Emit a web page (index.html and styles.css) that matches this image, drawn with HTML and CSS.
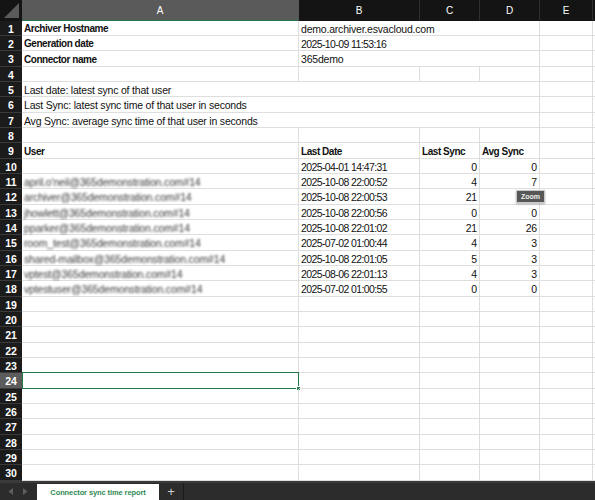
FILE: index.html
```html
<!DOCTYPE html>
<html>
<head>
<meta charset="utf-8">
<link rel="stylesheet" href="styles.css">
</head>
<body>
<div class="sheet">
  <div class="colhead">
    <div class="corner">
      <svg width="22" height="20" viewBox="0 0 22 20"><polygon points="4,18 19,18 19,3" fill="#5b5b5b"/></svg>
    </div>
    <div class="ch ca sel">A</div>
    <div class="ch cb">B</div>
    <div class="ch cc">C</div>
    <div class="ch cd">D</div>
    <div class="ch ce">E</div>
    <div class="ch cf"></div>
  </div>

  <div class="grid">
    <div class="r"><div class="rh">1</div><div class="c ca b">Archiver Hostname</div><div class="c cbd">demo.archiver.esvacloud.com</div><div class="c ce"></div><div class="c cf"></div></div>
    <div class="r"><div class="rh">2</div><div class="c ca b">Generation date</div><div class="c cbd dt">2025-10-09 11:53:16</div><div class="c ce"></div><div class="c cf"></div></div>
    <div class="r"><div class="rh">3</div><div class="c ca b">Connector name</div><div class="c cbd">365demo</div><div class="c ce"></div><div class="c cf"></div></div>
    <div class="r"><div class="rh">4</div><div class="c ca"></div><div class="c cb"></div><div class="c cc"></div><div class="c cd"></div><div class="c ce"></div><div class="c cf"></div></div>
    <div class="r"><div class="rh">5</div><div class="c cad">Last date: latest sync of that user</div><div class="c ce"></div><div class="c cf"></div></div>
    <div class="r"><div class="rh">6</div><div class="c cad">Last Sync: latest sync time of that user in seconds</div><div class="c ce"></div><div class="c cf"></div></div>
    <div class="r"><div class="rh">7</div><div class="c cad">Avg Sync: average sync time of that user in seconds</div><div class="c ce"></div><div class="c cf"></div></div>
    <div class="r"><div class="rh">8</div><div class="c ca"></div><div class="c cb"></div><div class="c cc"></div><div class="c cd"></div><div class="c ce"></div><div class="c cf"></div></div>
    <div class="r"><div class="rh">9</div><div class="c ca b">User</div><div class="c cb b">Last Date</div><div class="c cc b">Last Sync</div><div class="c cd b">Avg Sync</div><div class="c ce"></div><div class="c cf"></div></div>
    <div class="r"><div class="rh">10</div><div class="c ca"></div><div class="c cb dt">2025-04-01 14:47:31</div><div class="c cc n">0</div><div class="c cd n">0</div><div class="c ce"></div><div class="c cf"></div></div>
    <div class="r"><div class="rh">11</div><div class="c ca"><span class="hid">april.o'neil@365demonstration.com#14</span></div><div class="c cb dt">2025-10-08 22:00:52</div><div class="c cc n">4</div><div class="c cd n">7</div><div class="c ce"></div><div class="c cf"></div></div>
    <div class="r"><div class="rh">12</div><div class="c ca"><span class="hid">archiver@365demonstration.com#14</span></div><div class="c cb dt">2025-10-08 22:00:53</div><div class="c cc n">21</div><div class="c cd n"></div><div class="c ce"></div><div class="c cf"></div></div>
    <div class="r"><div class="rh">13</div><div class="c ca"><span class="hid">jhowlett@365demonstration.com#14</span></div><div class="c cb dt">2025-10-08 22:00:56</div><div class="c cc n">0</div><div class="c cd n">0</div><div class="c ce"></div><div class="c cf"></div></div>
    <div class="r"><div class="rh">14</div><div class="c ca"><span class="hid">pparker@365demonstration.com#14</span></div><div class="c cb dt">2025-10-08 22:01:02</div><div class="c cc n">21</div><div class="c cd n">26</div><div class="c ce"></div><div class="c cf"></div></div>
    <div class="r"><div class="rh">15</div><div class="c ca"><span class="hid">room_test@365demonstration.com#14</span></div><div class="c cb dt">2025-07-02 01:00:44</div><div class="c cc n">4</div><div class="c cd n">3</div><div class="c ce"></div><div class="c cf"></div></div>
    <div class="r"><div class="rh">16</div><div class="c ca"><span class="hid">shared-mailbox@365demonstration.com#14</span></div><div class="c cb dt">2025-10-08 22:01:05</div><div class="c cc n">5</div><div class="c cd n">3</div><div class="c ce"></div><div class="c cf"></div></div>
    <div class="r"><div class="rh">17</div><div class="c ca"><span class="hid">vptest@365demonstration.com#14</span></div><div class="c cb dt">2025-08-06 22:01:13</div><div class="c cc n">4</div><div class="c cd n">3</div><div class="c ce"></div><div class="c cf"></div></div>
    <div class="r"><div class="rh">18</div><div class="c ca"><span class="hid">vptestuser@365demonstration.com#14</span></div><div class="c cb dt">2025-07-02 01:00:55</div><div class="c cc n">0</div><div class="c cd n">0</div><div class="c ce"></div><div class="c cf"></div></div>
    <div class="r"><div class="rh">19</div><div class="c ca"></div><div class="c cb"></div><div class="c cc"></div><div class="c cd"></div><div class="c ce"></div><div class="c cf"></div></div>
    <div class="r"><div class="rh">20</div><div class="c ca"></div><div class="c cb"></div><div class="c cc"></div><div class="c cd"></div><div class="c ce"></div><div class="c cf"></div></div>
    <div class="r"><div class="rh">21</div><div class="c ca"></div><div class="c cb"></div><div class="c cc"></div><div class="c cd"></div><div class="c ce"></div><div class="c cf"></div></div>
    <div class="r"><div class="rh">22</div><div class="c ca"></div><div class="c cb"></div><div class="c cc"></div><div class="c cd"></div><div class="c ce"></div><div class="c cf"></div></div>
    <div class="r"><div class="rh">23</div><div class="c ca"></div><div class="c cb"></div><div class="c cc"></div><div class="c cd"></div><div class="c ce"></div><div class="c cf"></div></div>
    <div class="r"><div class="rh sel">24</div><div class="c ca active"><span class="handle"></span></div><div class="c cb"></div><div class="c cc"></div><div class="c cd"></div><div class="c ce"></div><div class="c cf"></div></div>
    <div class="r"><div class="rh">25</div><div class="c ca"></div><div class="c cb"></div><div class="c cc"></div><div class="c cd"></div><div class="c ce"></div><div class="c cf"></div></div>
    <div class="r"><div class="rh">26</div><div class="c ca"></div><div class="c cb"></div><div class="c cc"></div><div class="c cd"></div><div class="c ce"></div><div class="c cf"></div></div>
    <div class="r"><div class="rh">27</div><div class="c ca"></div><div class="c cb"></div><div class="c cc"></div><div class="c cd"></div><div class="c ce"></div><div class="c cf"></div></div>
    <div class="r"><div class="rh">28</div><div class="c ca"></div><div class="c cb"></div><div class="c cc"></div><div class="c cd"></div><div class="c ce"></div><div class="c cf"></div></div>
    <div class="r"><div class="rh">29</div><div class="c ca"></div><div class="c cb"></div><div class="c cc"></div><div class="c cd"></div><div class="c ce"></div><div class="c cf"></div></div>
    <div class="r"><div class="rh">30</div><div class="c ca"></div><div class="c cb"></div><div class="c cc"></div><div class="c cd"></div><div class="c ce"></div><div class="c cf"></div></div>
  </div>

  <div class="tabbar">
    <div class="nav">
      <svg width="37" height="17" viewBox="0 0 37 17"><polygon points="13,5 13,12 8.5,8.5" fill="#5e5e5e"/><polygon points="23,5 23,12 27.5,8.5" fill="#5e5e5e"/></svg>
    </div>
    <div class="tab">Connector sync time report</div>
    <div class="add">+</div>
    <div class="rest"></div>
  </div>

  <div class="tip">Zoom</div>
</div>
</body>
</html>
```

FILE: styles.css
```css
html, body {
  margin: 0;
  padding: 0;
  background: #ffffff;
}

.sheet {
  position: relative;
  width: 595px;
  height: 500px;
  overflow: hidden;
  display: flex;
  flex-direction: column;
  font-family: "Liberation Sans", Arial, sans-serif;
}

/* column letters */
.colhead {
  display: flex;
  height: 21px;
  flex: none;
  background: #141414;
}

.corner {
  width: 22px;
  height: 21px;
  flex: none;
  background: #141414;
}

.corner svg {
  display: block;
}

.ch {
  box-sizing: border-box;
  height: 21px;
  border-right: 1px solid #303030;
  border-bottom: 1px solid #141414;
  color: #ffffff;
  font-size: 10px;
  display: flex;
  align-items: center;
  justify-content: center;
  flex: none;
}

.ch.sel {
  background: #5a5a5a;
  border-bottom: 1px solid #1f7a46;
  border-right-color: #5a5a5a;
}

.ch.cf {
  flex: 1;
  border-right: none;
}

/* body rows */
.grid {
  display: flex;
  flex-direction: column;
  flex: none;
}

.r {
  display: flex;
  height: 15px;
}

.r:nth-child(3n) {
  height: 16px;
}

.rh {
  box-sizing: border-box;
  width: 22px;
  flex: none;
  background: #1b1b1b;
  border-bottom: 1px solid #3a3a3a;
  color: #ffffff;
  font-size: 10.5px;
  font-weight: bold;
  display: flex;
  align-items: center;
  justify-content: center;
  padding-top: 1px;
}

.rh.sel {
  background: #5c5c5c;
}

.c {
  box-sizing: border-box;
  flex: none;
  border-right: 1px solid #dedede;
  border-bottom: 1px solid #dedede;
  font-size: 10.5px;
  letter-spacing: -0.2px;
  color: #111111;
  padding: 1px 2px 0 2px;
  display: flex;
  align-items: center;
  white-space: nowrap;
  overflow: visible;
  position: relative;
}

.ca { width: 277px; }
.cb { width: 121px; }
.cc { width: 60px; }
.cd { width: 60px; }
.ce { width: 53px; }
.cf { flex: 1; border-right: none; }
.cbd { width: 241px; }
.cad { width: 518px; }

.b {
  font-weight: bold;
  font-size: 10px;
  letter-spacing: -0.45px;
}

.dt {
  letter-spacing: -0.6px;
}

.n {
  justify-content: flex-end;
}

.hid {
  color: #3a3a3a;
  letter-spacing: -0.15px;
  filter: blur(1.3px);
}

.active {
  border: 1px solid #1f7a46;
  margin-top: -1px;
  height: calc(100% + 1px);
}

.handle {
  position: absolute;
  right: -3px;
  bottom: -3px;
  width: 3px;
  height: 3px;
  background: #1f7a46;
  border: 1px solid #ffffff;
}

/* sheet tabs */
.tabbar {
  flex: 1;
  display: flex;
  background: #2c2c2c;
  border-top: 2px solid #3a3a3a;
  align-items: stretch;
}

.nav {
  width: 37px;
  flex: none;
  display: flex;
  align-items: center;
}

.nav svg {
  display: block;
}

.tab {
  width: 122px;
  flex: none;
  background: #ffffff;
  color: #2f8a53;
  font-size: 7.5px;
  font-weight: bold;
  letter-spacing: -0.1px;
  white-space: nowrap;
  display: flex;
  align-items: center;
  justify-content: center;
  margin-top: 1px;
}

.add {
  width: 24px;
  flex: none;
  color: #cfcfcf;
  font-size: 13px;
  display: flex;
  align-items: center;
  justify-content: center;
  border-right: 1px solid #1a1a1a;
}

.rest {
  flex: 1;
}

/* hover tooltip over D12 */
.tip {
  position: absolute;
  left: 516px;
  top: 190px;
  width: 27px;
  height: 11px;
  background: #575757;
  border: 1px solid #c9c9c9;
  color: #f0f0f0;
  font-size: 7px;
  font-weight: bold;
  display: flex;
  align-items: center;
  justify-content: center;
  box-shadow: 0 1px 2px rgba(0,0,0,0.3);
}
```
